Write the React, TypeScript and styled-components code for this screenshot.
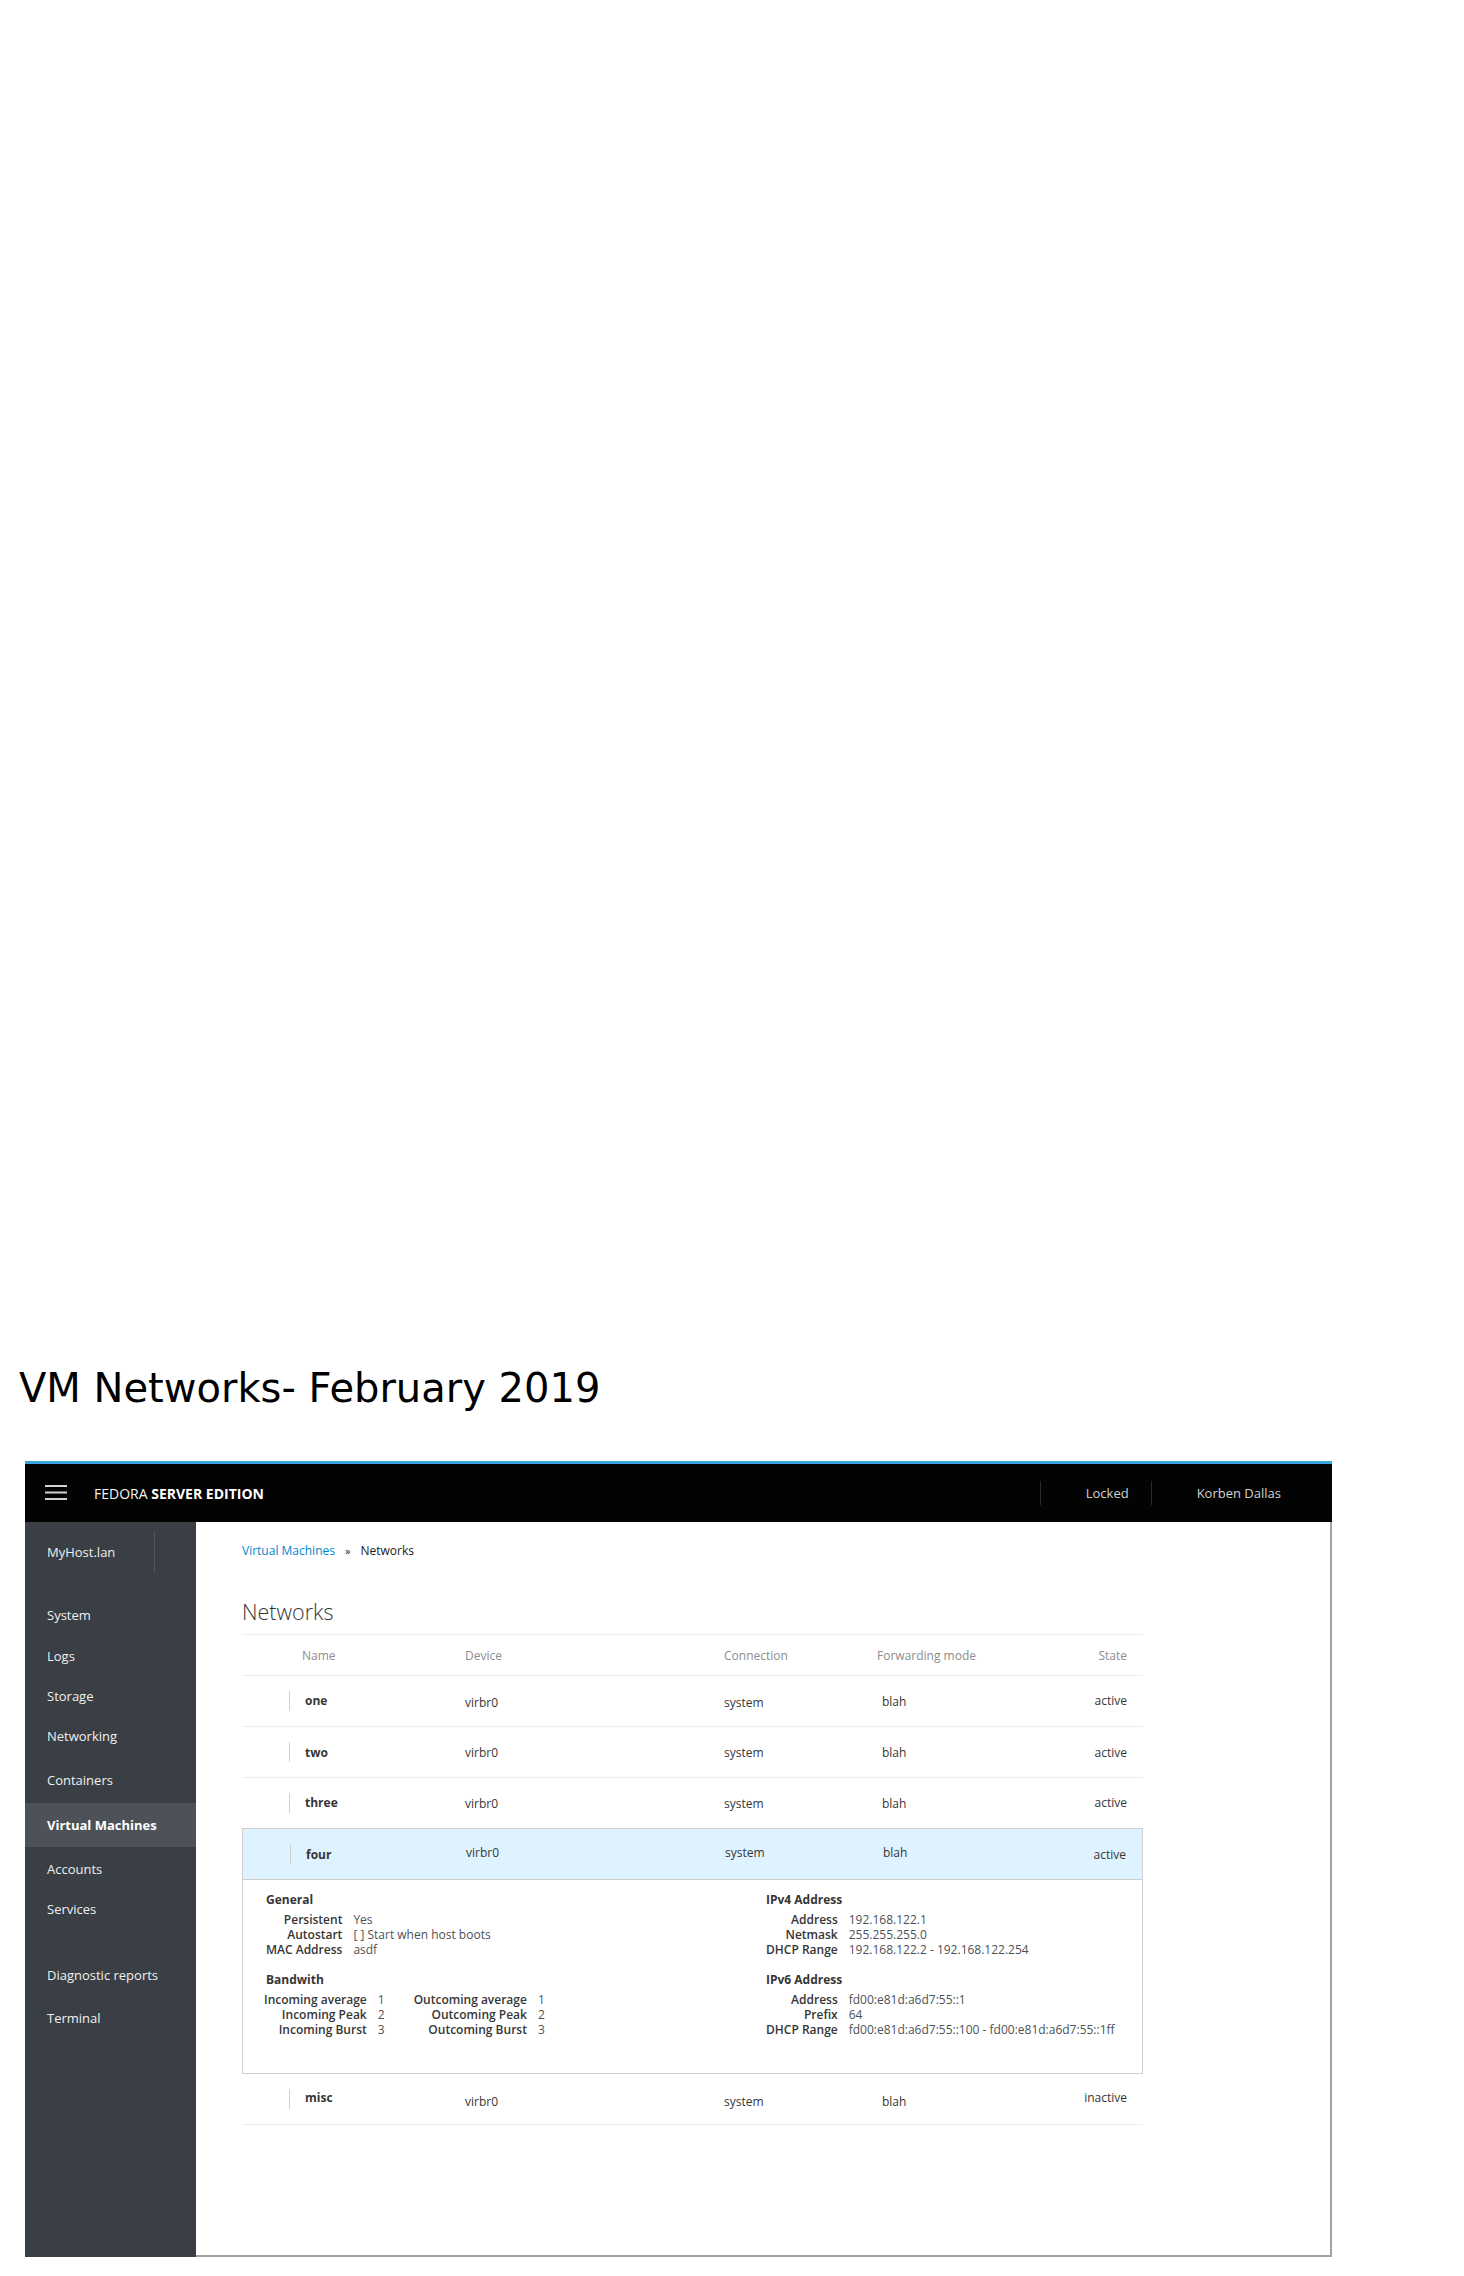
import React from "react";
import styled, { createGlobalStyle } from "styled-components";

const GlobalStyle = createGlobalStyle`
  html, body { margin: 0; padding: 0; background: #ffffff; }
  body { font-family: "Open Sans", "Liberation Sans", sans-serif; color: #363636; }
  * { box-sizing: border-box; }
`;

const Page = styled.div`
  width: 1464px;
  min-height: 2276px;
  padding-top: 1364px;
`;

const Title = styled.h1`
  margin: 0 0 0 19px;
  font-family: "DejaVu Sans", "Liberation Sans", sans-serif;
  font-weight: 400;
  font-size: 40px;
  line-height: 48px;
  color: #000;
`;

const Frame = styled.div`
  margin: 49px 0 0 25px;
  width: 1307px;
`;

const Masthead = styled.header`
  height: 61px;
  border-top: 3px solid #39a5dc;
  background: #030303;
  display: flex;
  align-items: center;
`;

const Burger = styled.svg`
  margin-left: 20px;
  width: 22px;
  height: 16px;
  flex: none;
`;

const Brand = styled.div`
  margin-left: 27px;
  font-size: 14px;
  color: #f5f5f5;
  b { font-weight: 700; color: #ffffff; }
`;

const Utility = styled.nav`
  margin-left: auto;
  padding-right: 29px;
  display: flex;
  align-items: center;
`;

const UtilityItem = styled.div`
  height: 24px;
  border-left: 1px solid #2a2a2a;
  padding: 0 22px 0 45px;
  display: flex;
  align-items: center;
  font-size: 13px;
  color: #d1d1d1;
`;

const Body = styled.div`
  display: flex;
  height: 735px;
`;

const Sidebar = styled.aside`
  width: 171px;
  flex: none;
  background: #393f44;
  display: flex;
  flex-direction: column;
`;

const HostRow = styled.div`
  margin-top: 9px;
  height: 42px;
  padding-left: 22px;
  display: flex;
  align-items: stretch;
`;

const HostName = styled.div`
  width: 108px;
  border-right: 1px solid #50565b;
  display: flex;
  align-items: center;
  font-size: 13px;
  color: #f0f0f0;
`;

const NavList = styled.ul`
  list-style: none;
  margin: 21px 0 0;
  padding: 0;
`;

const NavItem = styled.li<{ $active?: boolean; $gap?: number; $h?: number }>`
  height: ${(p) => p.$h ?? 42}px;
  margin-top: ${(p) => p.$gap ?? 0}px;
  padding-left: 22px;
  display: flex;
  align-items: center;
  font-size: 13px;
  font-weight: ${(p) => (p.$active ? 700 : 400)};
  color: ${(p) => (p.$active ? "#ffffff" : "#f0f0f0")};
  background: ${(p) => (p.$active ? "#4d5258" : "transparent")};
`;

const Main = styled.main`
  flex: 1;
  background: #ffffff;
  border-right: 2px solid #a3a3a3;
  border-bottom: 2px solid #a3a3a3;
  padding: 20px 0 0 46px;
`;

const Breadcrumb = styled.div`
  display: flex;
  align-items: center;
  font-size: 12px;
  line-height: 17px;
  color: #1a1a1a;
`;

const Crumb = styled.a`
  color: #0088ce;
  text-decoration: none;
`;

const CrumbSep = styled.span`
  margin: 0 10px;
  font-size: 11px;
`;

const Heading = styled.h2`
  margin: 40px 0 0;
  font-size: 21.5px;
  line-height: 25px;
  font-weight: 300;
  color: #363636;
`;

const Table = styled.div`
  margin-top: 10px;
  width: 901px;
  border-top: 1px solid #ededed;
`;

const columns = "47px 176px 259px 153px 1fr 100px";

const HeadRow = styled.div`
  display: grid;
  grid-template-columns: ${columns};
  align-items: center;
  height: 41px;
  padding-right: 16px;
  border-bottom: 1px solid #ededed;
  font-size: 12px;
  color: #8b8d8f;
`;

const HeadCell = styled.div<{ $pad?: number; $right?: boolean }>`
  padding-left: ${(p) => p.$pad ?? 0}px;
  text-align: ${(p) => (p.$right ? "right" : "left")};
`;

const Row = styled.div<{ $selected?: boolean }>`
  display: grid;
  grid-template-columns: ${columns};
  align-items: center;
  height: ${(p) => (p.$selected ? 52 : 51)}px;
  padding-right: 16px;
  font-size: 12px;
  color: #363636;
  border-bottom: 1px solid ${(p) => (p.$selected ? "#cfcfcf" : "#ededed")};
  ${(p) =>
    p.$selected
      ? `background: #def3ff; border-top: 1px solid #cfcfcf; border-left: 1px solid #cfcfcf; border-right: 1px solid #cfcfcf; margin-top: -1px;`
      : ""}
`;

const Cell = styled.div<{ $dy?: number; $pad?: number; $right?: boolean }>`
  padding-left: ${(p) => p.$pad ?? 0}px;
  padding-top: ${(p) => Math.max(0, (p.$dy ?? 0) * 2)}px;
  padding-bottom: ${(p) => Math.max(0, -(p.$dy ?? 0) * 2)}px;
  text-align: ${(p) => (p.$right ? "right" : "left")};
  white-space: nowrap;
`;

const NameCell = styled.div`
  display: flex;
  align-items: center;
  height: 20px;
`;

const Bar = styled.span`
  width: 1px;
  height: 20px;
  background: #d1d1d1;
  flex: none;
`;

const NameText = styled.span<{ $dy?: number }>`
  margin-left: 15px;
  font-weight: 700;
  padding-top: ${(p) => Math.max(0, (p.$dy ?? 0) * 2)}px;
  padding-bottom: ${(p) => Math.max(0, -(p.$dy ?? 0) * 2)}px;
`;

const Expansion = styled.div`
  display: grid;
  grid-template-columns: 500px 1fr;
  border: 1px solid #cfcfcf;
  border-top: none;
  padding: 12px 0 36px 23px;
  height: 194px;
`;

const Column = styled.div`
  display: flex;
  flex-direction: column;
`;

const Section = styled.section<{ $first?: boolean }>`
  margin-top: ${(p) => (p.$first ? 0 : 15)}px;
`;

const SectionTitle = styled.div`
  font-size: 12px;
  line-height: 15px;
  font-weight: 700;
  color: #363636;
  margin-bottom: 5px;
`;

const KVGrid = styled.dl`
  margin: 0;
  display: grid;
  grid-template-columns: auto auto;
  justify-content: start;
  column-gap: 11px;
  font-size: 12px;
  line-height: 15px;
`;

const Key = styled.dt`
  margin: 0;
  text-align: right;
  font-weight: 600;
  color: #363636;
  white-space: nowrap;
`;

const Val = styled.dd`
  margin: 0;
  color: #4d5258;
  white-space: nowrap;
`;

const KVPair = styled.div`
  display: flex;
  gap: 29px;
  margin-left: -2px;
`;

type Net = {
  name: string;
  state: string;
  nameDy: number;
  devDy: number;
  conDy: number;
  fwdDy: number;
  stateDy: number;
  selected?: boolean;
};

const nets: Net[] = [
  { name: "one", state: "active", nameDy: -1, devDy: 1, conDy: 1, fwdDy: 0, stateDy: -1 },
  { name: "two", state: "active", nameDy: 0, devDy: 0, conDy: 0, fwdDy: 0, stateDy: 0 },
  { name: "three", state: "active", nameDy: -1, devDy: 0, conDy: 0, fwdDy: 0, stateDy: -1 },
  { name: "four", state: "active", nameDy: 0, devDy: -2, conDy: -2, fwdDy: -2, stateDy: 0, selected: true },
];

const misc: Net = { name: "misc", state: "inactive", nameDy: -2, devDy: 2, conDy: 2, fwdDy: 2, stateDy: -2 };

const KV = ({ rows }: { rows: [string, string][] }) => (
  <KVGrid>
    {rows.map(([k, v]) => (
      <React.Fragment key={k}>
        <Key>{k}</Key>
        <Val>{v}</Val>
      </React.Fragment>
    ))}
  </KVGrid>
);

const NetRow = ({ n }: { n: Net }) => (
  <Row $selected={n.selected}>
    <div />
    <NameCell>
      <Bar />
      <NameText $dy={n.nameDy}>{n.name}</NameText>
    </NameCell>
    <Cell $dy={n.devDy}>virbr0</Cell>
    <Cell $dy={n.conDy}>system</Cell>
    <Cell $dy={n.fwdDy} $pad={5}>blah</Cell>
    <Cell $dy={n.stateDy} $right>{n.state}</Cell>
  </Row>
);

const navItems: { label: string; active?: boolean; gap?: number; h?: number }[] = [
  { label: "System" },
  { label: "Logs", h: 40 },
  { label: "Storage", h: 40 },
  { label: "Networking", h: 40 },
  { label: "Containers", h: 47 },
  { label: "Virtual Machines", active: true, h: 44 },
  { label: "Accounts", h: 44 },
  { label: "Services", h: 36 },
  { label: "Diagnostic reports", gap: 27 },
  { label: "Terminal", h: 44 },
];

export default function App() {
  return (
    <>
      <GlobalStyle />
      <Page>
        <Title>VM Networks- February 2019</Title>
        <Frame>
          <Masthead>
            <Burger viewBox="0 0 22 16" aria-hidden>
              <rect x="0" y="0" width="22" height="2" fill="#d1d1d1" />
              <rect x="0" y="6.5" width="22" height="2" fill="#d1d1d1" />
              <rect x="0" y="13" width="22" height="2" fill="#d1d1d1" />
            </Burger>
            <Brand>
              FEDORA <b>SERVER EDITION</b>
            </Brand>
            <Utility>
              <UtilityItem>Locked</UtilityItem>
              <UtilityItem>Korben Dallas</UtilityItem>
            </Utility>
          </Masthead>
          <Body>
            <Sidebar>
              <HostRow>
                <HostName>MyHost.lan</HostName>
              </HostRow>
              <NavList>
                {navItems.map((it) => (
                  <NavItem key={it.label} $active={it.active} $gap={it.gap} $h={it.h}>
                    {it.label}
                  </NavItem>
                ))}
              </NavList>
            </Sidebar>
            <Main>
              <Breadcrumb>
                <Crumb href="#">Virtual Machines</Crumb>
                <CrumbSep>»</CrumbSep>
                <span>Networks</span>
              </Breadcrumb>
              <Heading>Networks</Heading>
              <Table>
                <HeadRow>
                  <div />
                  <HeadCell $pad={13}>Name</HeadCell>
                  <HeadCell>Device</HeadCell>
                  <HeadCell>Connection</HeadCell>
                  <HeadCell>Forwarding mode</HeadCell>
                  <HeadCell $right>State</HeadCell>
                </HeadRow>
                {nets.map((n) => (
                  <NetRow key={n.name} n={n} />
                ))}
                <Expansion>
                  <Column>
                    <Section $first>
                      <SectionTitle>General</SectionTitle>
                      <KV
                        rows={[
                          ["Persistent", "Yes"],
                          ["Autostart", "[ ] Start when host boots"],
                          ["MAC Address", "asdf"],
                        ]}
                      />
                    </Section>
                    <Section>
                      <SectionTitle>Bandwith</SectionTitle>
                      <KVPair>
                        <KV
                          rows={[
                            ["Incoming average", "1"],
                            ["Incoming Peak", "2"],
                            ["Incoming Burst", "3"],
                          ]}
                        />
                        <KV
                          rows={[
                            ["Outcoming average", "1"],
                            ["Outcoming Peak", "2"],
                            ["Outcoming Burst", "3"],
                          ]}
                        />
                      </KVPair>
                    </Section>
                  </Column>
                  <Column>
                    <Section $first>
                      <SectionTitle>IPv4 Address</SectionTitle>
                      <KV
                        rows={[
                          ["Address", "192.168.122.1"],
                          ["Netmask", "255.255.255.0"],
                          ["DHCP Range", "192.168.122.2 - 192.168.122.254"],
                        ]}
                      />
                    </Section>
                    <Section>
                      <SectionTitle>IPv6 Address</SectionTitle>
                      <KV
                        rows={[
                          ["Address", "fd00:e81d:a6d7:55::1"],
                          ["Prefix", "64"],
                          ["DHCP Range", "fd00:e81d:a6d7:55::100 - fd00:e81d:a6d7:55::1ff"],
                        ]}
                      />
                    </Section>
                  </Column>
                </Expansion>
                <NetRow n={misc} />
              </Table>
            </Main>
          </Body>
        </Frame>
      </Page>
    </>
  );
}
